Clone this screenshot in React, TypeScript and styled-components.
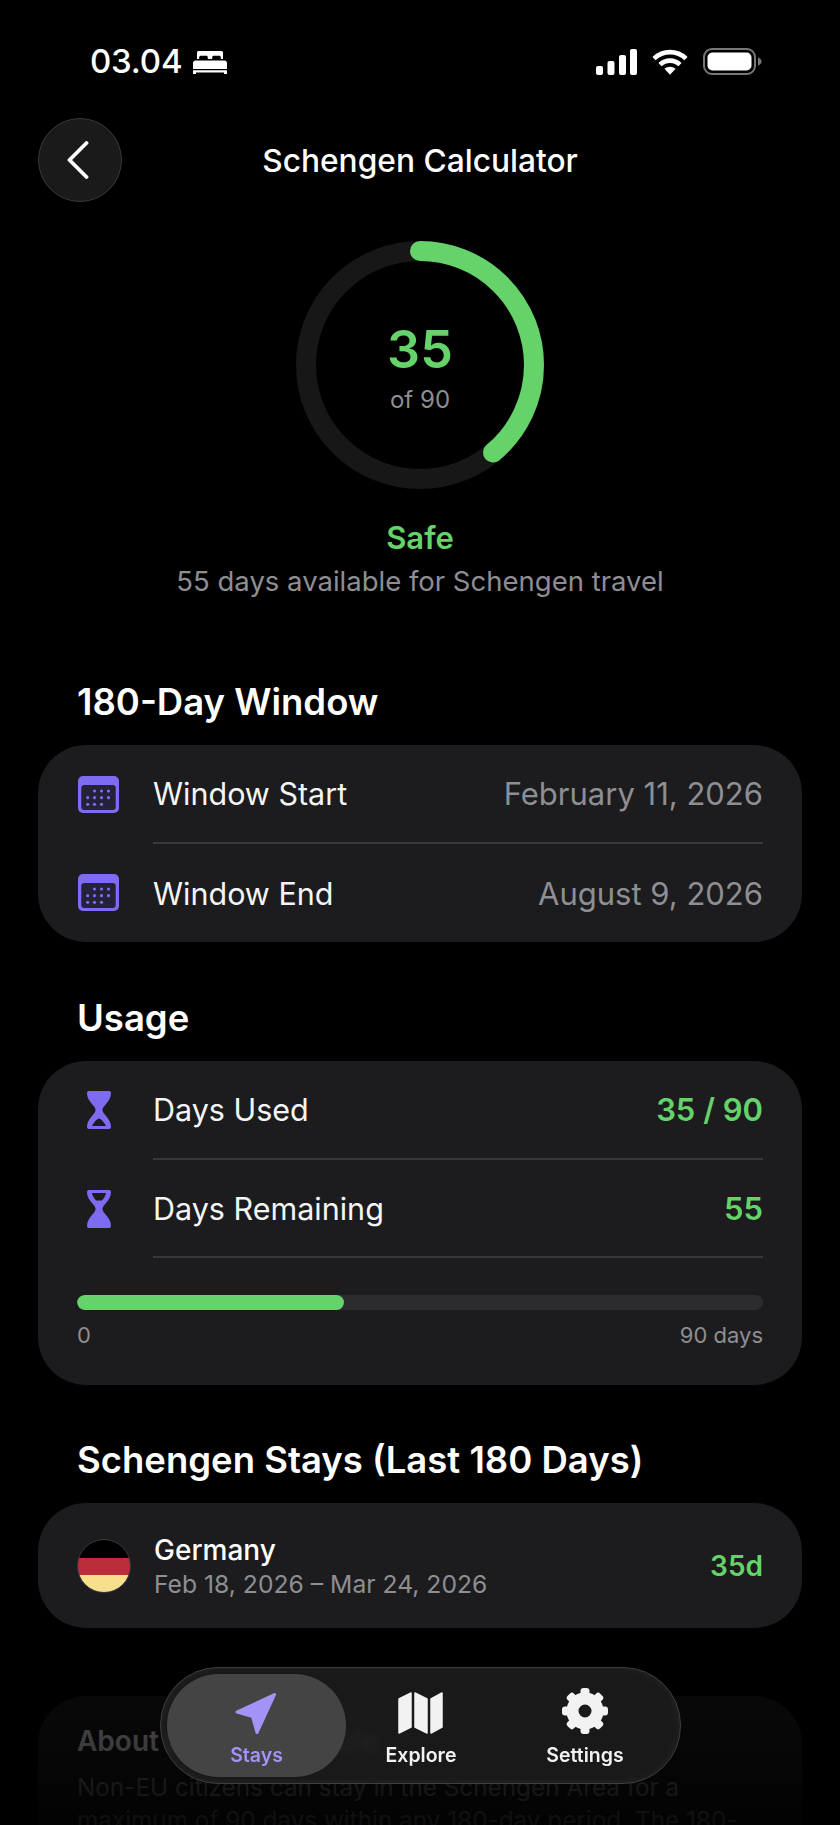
import React from 'react';
import styled, { createGlobalStyle } from 'styled-components';

const GREEN = '#65d26a';
const PURPLE = '#7d6bf2';
const GRAY = '#8e8e93';

const GlobalStyle = createGlobalStyle`
  html, body {
    margin: 0;
    padding: 0;
    background: #000;
  }
  body {
    font-family: Inter, "Liberation Sans", sans-serif;
    color: #fff;
  }
`;

function BedIcon() {
  return (
    <svg width="34" height="23" viewBox="0 0 34 23" fill="#fff">
      <path d="M4 1.5C4 .7 4.7 0 5.5 0h23c.8 0 1.5.7 1.5 1.5V8h-2.2V6.4c0-.9-.7-1.6-1.600-1.600h-5.400c-.9 0-1.600.7-1.600 1.600V8h-4.400V6.400c0-.9-.7-1.600-1.600-1.600H7.800c-.9 0-1.600.7-1.600 1.600V8H4V1.500z" />
      <path d="M2.500 9.500h29c1.400 0 2.500 1.100 2.500 2.500v6H0v-6c0-1.400 1.100-2.500 2.500-2.500zM0 19.200h34V23h-3v-1.600H3V23H0v-3.800z" />
    </svg>
  );
}

function SignalIcon() {
  return (
    <svg width="41" height="26" viewBox="0 0 41 26" fill="#fff">
      <rect x="0" y="17" width="7" height="9" rx="2" />
      <rect x="11.500" y="12" width="7" height="14" rx="2" />
      <rect x="23" y="6" width="7" height="20" rx="2" />
      <rect x="34" y="0" width="7" height="26" rx="2" />
    </svg>
  );
}

function WifiIcon() {
  return (
    <svg width="36" height="26" viewBox="0 0 36 26" fill="none" stroke="#fff" strokeWidth="4.600">
      <path d="M2 9.600C11 1 25 1 34 9.600" />
      <path d="M8 15.600c5.800-5.300 14.200-5.300 20 0" />
      <path d="M18 25.800l-5.600-6c3.300-2.700 7.900-2.700 11.200 0z" fill="#fff" stroke="none" />
    </svg>
  );
}

function BatteryIcon() {
  return (
    <svg width="59" height="27" viewBox="0 0 59 27" fill="none">
      <rect x="1" y="1" width="51" height="25" rx="8" stroke="#77777a" strokeWidth="2" />
      <rect x="4.500" y="4.500" width="44" height="18" rx="5" fill="#fff" />
      <path d="M55 9.500c2 .6 3.500 2 3.500 4s-1.500 3.400-3.500 4z" fill="#77777a" />
    </svg>
  );
}

function ChevronIcon() {
  return (
    <svg width="22" height="38" viewBox="0 0 22 38" fill="none" stroke="#fff" strokeWidth="3.800" strokeLinecap="round" strokeLinejoin="round">
      <path d="M19.500 2 2.500 19l17 17" />
    </svg>
  );
}

function CalendarIcon() {
  const dots = [
    [16.500, 15], [23.500, 15], [30.500, 15],
    [9.700, 21.700], [16.500, 21.700], [23.500, 21.700], [30.500, 21.700],
    [9.700, 28.300], [16.500, 28.300], [23.500, 28.300],
  ];
  return (
    <svg width="41" height="37" viewBox="0 0 41 37">
      <rect x="0" y="0" width="41" height="37" rx="5" fill={PURPLE} />
      <rect x="3.300" y="9" width="34.400" height="25" rx="3" fill="#232238" />
      {dots.map(([cx, cy]) => (
        <circle key={`${cx}-${cy}`} cx={cx} cy={cy} r="1.600" fill={PURPLE} />
      ))}
    </svg>
  );
}

function HourglassIcon({ $emptyTop }: { $emptyTop?: boolean }) {
  const body = 'M2 0h20c1.200 0 2 .8 2 2 0 4.500-2.200 7.800-5 11-2 2.300-3.500 4-3.500 6s1.500 3.700 3.500 6c2.800 3.200 5 6.500 5 11 0 1.200-.8 2-2 2H2c-1.200 0-2-.8-2-2 0-4.500 2.200-7.800 5-11 2-2.300 3.500-4 3.500-6s-1.500-3.700-3.500-6C2.200 9.800 0 6.500 0 2 0 .8.800 0 2 0z';
  return (
    <svg width="24" height="38" viewBox="0 0 24 38" fill={PURPLE}>
      <path d={body} />
      {$emptyTop
        ? <path d="M5 3h14c-.4 2.800-2 5.200-4.200 7.500H9.200C7 8.200 5.400 5.800 5 3z" fill="#1c1c1e" />
        : <path d="M12 27.500c1.800 0 5.500 4.200 7 7.500H5c1.500-3.300 5.200-7.500 7-7.500z" fill="#1c1c1e" />}
    </svg>
  );
}

function NavigationIcon() {
  return (
    <svg width="41" height="41" viewBox="0 0 41 41" fill="#a393f7" stroke="#a393f7" strokeWidth="3" strokeLinejoin="round">
      <path d="M39.500 1.500 2 19l15.500 4.500 4.500 16z" />
    </svg>
  );
}

function MapIcon() {
  return (
    <svg width="45" height="42" viewBox="0 0 45 42" fill="#f2f2f2" stroke="#f2f2f2" strokeWidth="1.500" strokeLinejoin="round">
      <path d="M1 7 13 1v34L1 41z" />
      <path d="M17 1l12 6v34l-12-6z" />
      <path d="M33 7l11-6v34l-11 6z" />
    </svg>
  );
}

function GearIcon() {
  const teeth = [0, 45, 90, 135, 180, 225, 270, 315];
  return (
    <svg width="46" height="46" viewBox="0 0 46 46" fill="none">
      <circle cx="23" cy="23" r="12.500" stroke="#f2f2f2" strokeWidth="12" />
      {teeth.map(angle => (
        <rect key={angle} x="18.500" y="0" width="9" height="10" rx="3" fill="#f2f2f2" transform={`rotate(${angle} 23 23)`} />
      ))}
    </svg>
  );
}

function ProgressRing() {
  const radius = 114;
  const circumference = 2 * Math.PI * radius;
  const used = (35 / 90) * circumference;
  return (
    <svg width="248" height="248" viewBox="0 0 248 248" fill="none">
      <circle cx="124" cy="124" r={radius} stroke="#171717" strokeWidth="20" />
      <circle
        cx="124"
        cy="124"
        r={radius}
        stroke={GREEN}
        strokeWidth="20"
        strokeLinecap="round"
        strokeDasharray={`${used} ${circumference}`}
        transform="rotate(-90 124 124)"
      />
    </svg>
  );
}

export default function App() {
  return (
    <Page>
      <GlobalStyle />
      <StatusBar>
        <StatusLeft>
          <Clock>03.04</Clock>
          <BedIcon />
        </StatusLeft>
        <StatusRight>
          <SignalIcon />
          <WifiIcon />
          <BatteryIcon />
        </StatusRight>
      </StatusBar>

      <Header>
        <BackButton>
          <ChevronIcon />
        </BackButton>
        <Title>Schengen Calculator</Title>
      </Header>

      <Summary>
        <RingWrap>
          <ProgressRing />
          <RingCenter>
            <RingValue>35</RingValue>
            <RingCaption>of 90</RingCaption>
          </RingCenter>
        </RingWrap>
        <SafeLabel>Safe</SafeLabel>
        <SafeCaption>55 days available for Schengen travel</SafeCaption>
      </Summary>

      <SectionTitle $gap={82}>180-Day Window</SectionTitle>
      <Card>
        <Row>
          <RowIcon><CalendarIcon /></RowIcon>
          <RowBody $divider>
            <RowLabel>Window Start</RowLabel>
            <RowValue>February 11, 2026</RowValue>
          </RowBody>
        </Row>
        <Row>
          <RowIcon><CalendarIcon /></RowIcon>
          <RowBody>
            <RowLabel>Window End</RowLabel>
            <RowValue>August 9, 2026</RowValue>
          </RowBody>
        </Row>
      </Card>

      <SectionTitle $gap={54}>Usage</SectionTitle>
      <Card>
        <Row>
          <RowIcon><HourglassIcon /></RowIcon>
          <RowBody $divider>
            <RowLabel>Days Used</RowLabel>
            <RowValue $accent>35 / 90</RowValue>
          </RowBody>
        </Row>
        <Row>
          <RowIcon><HourglassIcon $emptyTop /></RowIcon>
          <RowBody $divider>
            <RowLabel>Days Remaining</RowLabel>
            <RowValue $accent>55</RowValue>
          </RowBody>
        </Row>
        <UsageBlock>
          <Track>
            <Fill style={{ width: `${(35 / 90) * 100}%` }} />
          </Track>
          <TrackLabels>
            <span>0</span>
            <span>90 days</span>
          </TrackLabels>
        </UsageBlock>
      </Card>

      <SectionTitle $gap={53}>Schengen Stays (Last 180 Days)</SectionTitle>
      <Card>
        <StayRow>
          <Flag />
          <StayText>
            <StayName>Germany</StayName>
            <StayDates>Feb 18, 2026 – Mar 24, 2026</StayDates>
          </StayText>
          <StayDays>35d</StayDays>
        </StayRow>
      </Card>

      <InfoCard>
        <InfoTitle>About the 90/180 Rule</InfoTitle>
        <InfoText>
          Non-EU citizens can stay in the Schengen Area for a maximum of 90 days within any 180-day period. The 180-day window is rolling.
        </InfoText>
      </InfoCard>

      <BottomFade />

      <TabBar>
        <Tab $active>
          <TabIcon $shift={-3}><NavigationIcon /></TabIcon>
          <TabLabel $active>Stays</TabLabel>
        </Tab>
        <Tab>
          <TabIcon $shift={-2}><MapIcon /></TabIcon>
          <TabLabel>Explore</TabLabel>
        </Tab>
        <Tab>
          <TabIcon><GearIcon /></TabIcon>
          <TabLabel>Settings</TabLabel>
        </Tab>
      </TabBar>
    </Page>
  );
}

const Page = styled.div`
  position: relative;
  width: 840px;
  height: 1825px;
  padding: 0 38px;
  box-sizing: border-box;
  overflow: hidden;
  background: #000;
`;

const StatusBar = styled.div`
  display: flex;
  justify-content: space-between;
  align-items: center;
  height: 27px;
  padding: 48px 40px 0 52px;
`;

const StatusLeft = styled.div`
  display: flex;
  align-items: center;
  gap: 11px;
  svg { margin-top: 2px; }
`;

const Clock = styled.span`
  font-size: 33px;
  line-height: 27px;
  font-weight: 500;
  letter-spacing: -0.2px;
`;

const StatusRight = styled.div`
  display: flex;
  align-items: center;
  gap: 15px;
`;

const Header = styled.div`
  display: flex;
  justify-content: center;
  align-items: center;
  position: relative;
  height: 84px;
  margin-top: 43px;
`;

const BackButton = styled.div`
  position: absolute;
  left: 0;
  top: 0;
  display: flex;
  align-items: center;
  justify-content: center;
  width: 84px;
  height: 84px;
  padding-right: 4px;
  box-sizing: border-box;
  border-radius: 50%;
  background: #1a1a1a;
  border: 1.500px solid #3a3a3a;
`;

const Title = styled.h1`
  margin: 2px 0 0;
  font-size: 31.700px;
  line-height: 40px;
  font-weight: 500;
`;

const Summary = styled.div`
  display: flex;
  flex-direction: column;
  align-items: center;
  margin-top: 39px;
`;

const RingWrap = styled.div`
  position: relative;
  width: 248px;
  height: 248px;
  svg { display: block; }
`;

const RingCenter = styled.div`
  position: absolute;
  inset: 0;
  padding-top: 5px;
  box-sizing: border-box;
  display: flex;
  flex-direction: column;
  align-items: center;
  justify-content: center;
`;

const RingValue = styled.div`
  font-size: 52px;
  line-height: 60px;
  font-weight: 600;
  color: ${GREEN};
`;

const RingCaption = styled.div`
  margin-top: 5px;
  font-size: 24px;
  line-height: 30px;
  color: ${GRAY};
`;

const SafeLabel = styled.div`
  margin-top: 30px;
  font-size: 31px;
  line-height: 38px;
  font-weight: 600;
  color: ${GREEN};
`;

const SafeCaption = styled.div`
  margin-top: 7px;
  font-size: 27.500px;
  line-height: 34px;
  color: ${GRAY};
`;

const SectionTitle = styled.h2<{ $gap: number }>`
  margin: ${p => p.$gap}px 0 21px 39px;
  font-size: 36.500px;
  line-height: 44px;
  font-weight: 600;
`;

const Card = styled.div`
  background: #1c1c1e;
  border-radius: 48px;
  overflow: hidden;
`;

const Row = styled.div`
  display: flex;
  align-items: stretch;
  height: 98.500px;
  padding: 0 39px 0 39px;
`;

const RowIcon = styled.div`
  display: flex;
  align-items: center;
  justify-content: center;
  flex: 0 0 43px;
  margin-right: 33px;
`;

const RowBody = styled.div<{ $divider?: boolean }>`
  flex: 1;
  display: flex;
  align-items: center;
  justify-content: space-between;
  padding-top: 2px;
  border-bottom: ${p => (p.$divider ? '2px solid #38383a' : 'none')};
`;

const RowLabel = styled.span`
  font-size: 30.500px;
  line-height: 38px;
  color: #f5f5f5;
`;

const RowValue = styled.span<{ $accent?: boolean }>`
  font-size: 31px;
  line-height: 38px;
  font-weight: ${p => (p.$accent ? 600 : 400)};
  color: ${p => (p.$accent ? GREEN : GRAY)};
`;

const UsageBlock = styled.div`
  padding: 37px 39px 0;
  height: 127px;
  box-sizing: border-box;
`;

const Track = styled.div`
  height: 15px;
  border-radius: 8px;
  background: #2c2c2e;
  overflow: hidden;
`;

const Fill = styled.div`
  height: 100%;
  border-radius: 8px;
  background: ${GREEN};
`;

const TrackLabels = styled.div`
  display: flex;
  justify-content: space-between;
  margin-top: 11px;
  font-size: 22px;
  line-height: 28px;
  color: ${GRAY};
`;

const StayRow = styled.div`
  display: flex;
  align-items: center;
  height: 125px;
  padding: 0 39px;
`;

const Flag = styled.div`
  flex: 0 0 54px;
  height: 54px;
  box-sizing: border-box;
  border-radius: 50%;
  border: 1px solid #3a3a3c;
  background: linear-gradient(#000 0 34%, #bb2d3b 34% 67%, #f7df8e 67% 100%);
  margin-right: 23px;
`;

const StayText = styled.div`
  flex: 1;
`;

const StayName = styled.div`
  font-size: 28px;
  line-height: 36px;
  font-weight: 500;
`;

const StayDates = styled.div`
  font-size: 24.700px;
  line-height: 32px;
  color: ${GRAY};
`;

const StayDays = styled.div`
  font-size: 28px;
  font-weight: 600;
  color: ${GREEN};
`;

const InfoCard = styled.div`
  margin-top: 68px;
  padding: 27px 39px 0;
  height: 300px;
  box-sizing: border-box;
  border-radius: 48px;
  background: #1c1c1e;
`;

const InfoTitle = styled.div`
  font-size: 28px;
  line-height: 36px;
  font-weight: 600;
`;

const InfoText = styled.div`
  margin-top: 12px;
  font-size: 24.300px;
  line-height: 33px;
  color: ${GRAY};
`;

const BottomFade = styled.div`
  position: absolute;
  left: 0;
  right: 0;
  bottom: 0;
  height: 180px;
  background: linear-gradient(rgba(0, 0, 0, 0.62), rgba(0, 0, 0, 0.78) 60%, rgba(0, 0, 0, 0.9));
`;

const TabBar = styled.div`
  position: absolute;
  left: 160px;
  top: 1667px;
  display: grid;
  grid-template-columns: 179px 150px 178px;
  width: 521px;
  height: 117px;
  padding: 6px;
  box-sizing: border-box;
  border-radius: 58px;
  border: 1.500px solid #3e3e3e;
  background: rgba(28, 28, 28, 0.88);
  box-shadow: inset 0 0 10px rgba(255, 255, 255, 0.06);
  backdrop-filter: blur(2px);
`;

const Tab = styled.div<{ $active?: boolean }>`
  display: flex;
  flex-direction: column;
  align-items: center;
  justify-content: flex-end;
  gap: 9px;
  padding-bottom: 10px;
  border-radius: 52px;
  background: ${p => (p.$active ? '#444444' : 'transparent')};
`;

const TabIcon = styled.div<{ $shift?: number }>`
  display: flex;
  margin-left: ${p => p.$shift ?? 0}px;
`;

const TabLabel = styled.span<{ $active?: boolean }>`
  font-size: 19.500px;
  line-height: 24px;
  font-weight: 600;
  color: ${p => (p.$active ? '#a393f7' : '#f2f2f2')};
`;
